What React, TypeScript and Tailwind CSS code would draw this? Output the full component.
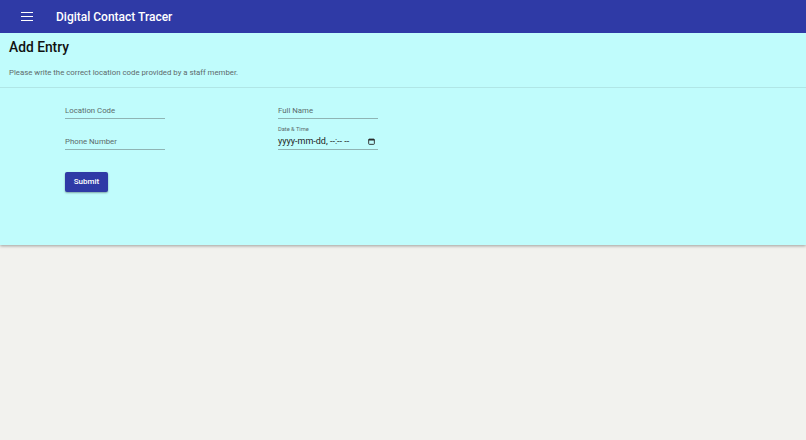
import React from 'react';

export default function App() {
  return (
    <div className="min-h-screen bg-[#f2f2ee]" style={{ fontFamily: 'Roboto, "Liberation Sans", sans-serif' }}>
      {/* Toolbar */}
      <header className="h-[33px] bg-[#2f3aa6] flex items-center text-white relative z-10">
        <button className="ml-[21px] w-[12px] flex flex-col gap-[2.5px]">
          <span className="block h-[1.5px] bg-white" />
          <span className="block h-[1.5px] bg-white" />
          <span className="block h-[1.5px] bg-white" />
        </button>
        <h1 className="ml-[23px] text-[12px] font-medium">Digital Contact Tracer</h1>
      </header>

      {/* Card */}
      <div className="h-[212px] bg-[#c0fcfc] shadow-[0_1px_3px_rgba(0,0,0,0.35)]">
        <div className="px-[9px] pt-[5px] pb-[8px]">
          <h2 className="text-[13.8px] leading-[19px] font-medium text-[#111]">Add Entry</h2>
          <p className="mt-[10px] text-[7.8px] leading-[12px] text-[#5d6a6b]">
            Please write the correct location code provided by a staff member.
          </p>
        </div>
        <div className="border-t border-[#b0e6e6]" />

        <form className="pl-[65px]" onSubmit={(e) => e.preventDefault()}>
          <div className="grid grid-cols-[100px_100px] gap-x-[113px]">
            <div className="h-[31px] flex flex-col justify-end">
              <input
                placeholder="Location Code"
                className="h-[16px] bg-transparent border-b border-[#8fb4b4] text-[7.8px] outline-none placeholder:text-[#5b6b6b] w-full"
              />
            </div>
            <div className="h-[31px] flex flex-col justify-end">
              <input
                placeholder="Full Name"
                className="h-[16px] bg-transparent border-b border-[#8fb4b4] text-[7.8px] outline-none placeholder:text-[#5b6b6b] w-full"
              />
            </div>
            <div className="h-[31px] flex flex-col justify-end">
              <input
                placeholder="Phone Number"
                className="h-[16px] bg-transparent border-b border-[#8fb4b4] text-[7.8px] outline-none placeholder:text-[#5b6b6b] w-full"
              />
            </div>
            <div className="h-[31px] flex flex-col justify-end">
              <label className="text-[5.7px] leading-[7px] text-[#5b6b6b] mb-[1px]">Date &amp; Time</label>
              <div className="h-[16px] border-b border-[#8fb4b4] flex items-center justify-between text-[9px] text-[#1b1b1b]">
                <span>yyyy-mm-dd, --:-- --</span>
                <svg width="7" height="7" viewBox="0 0 8 8" className="mr-[3px]">
                  <rect x="0.75" y="1.25" width="6.5" height="6" rx="0.8" fill="none" stroke="#222" strokeWidth="1" />
                  <rect x="0.75" y="1.25" width="6.5" height="1.6" fill="#222" />
                </svg>
              </div>
            </div>
          </div>

          <button
            type="submit"
            className="mt-[22px] h-[20px] w-[43px] rounded-[2px] bg-[#2f3aa6] text-white text-[8px] font-medium shadow-[0_1px_2px_rgba(0,0,0,0.35)]"
          >
            Submit
          </button>
        </form>
      </div>
    </div>
  );
}
